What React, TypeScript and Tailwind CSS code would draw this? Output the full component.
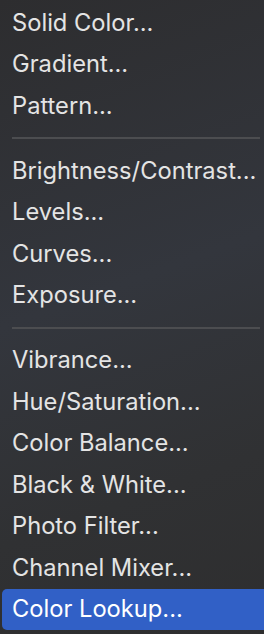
const groups: string[][] = [
  ["Solid Color...", "Gradient...", "Pattern..."],
  ["Brightness/Contrast...", "Levels...", "Curves...", "Exposure..."],
  [
    "Vibrance...",
    "Hue/Saturation...",
    "Color Balance...",
    "Black & White...",
    "Photo Filter...",
    "Channel Mixer...",
    "Color Lookup...",
  ],
];

const selected = "Color Lookup...";

export default function App() {
  return (
    <div
      className="w-[264px] h-[634px] overflow-hidden pt-[2px] bg-[linear-gradient(160deg,#2d2d2f_0%,#33363d_45%,#303133_75%,#2e2e2f_100%)] text-[23.7px] text-[#e4e4e4] leading-none"
      style={{ fontFamily: "Inter, 'Noto Sans', sans-serif" }}
    >
      {groups.map((items, gi) => (
        <div key={gi}>
          {gi > 0 && (
            <div className="h-[23.5px] flex items-center pl-[12px] pr-[4px]">
              <div className="h-[2px] w-full bg-[#4c4d50]" />
            </div>
          )}
          {items.map((item) => (
            <div
              key={item}
              className={
                item === selected
                  ? "h-[41.5px] flex items-center ml-[2px] pl-[10px] -mr-[8px] rounded-[5px] bg-[#3160c6] text-white"
                  : "h-[41.5px] flex items-center pl-[12px]"
              }
            >
              {item}
            </div>
          ))}
        </div>
      ))}
    </div>
  );
}
